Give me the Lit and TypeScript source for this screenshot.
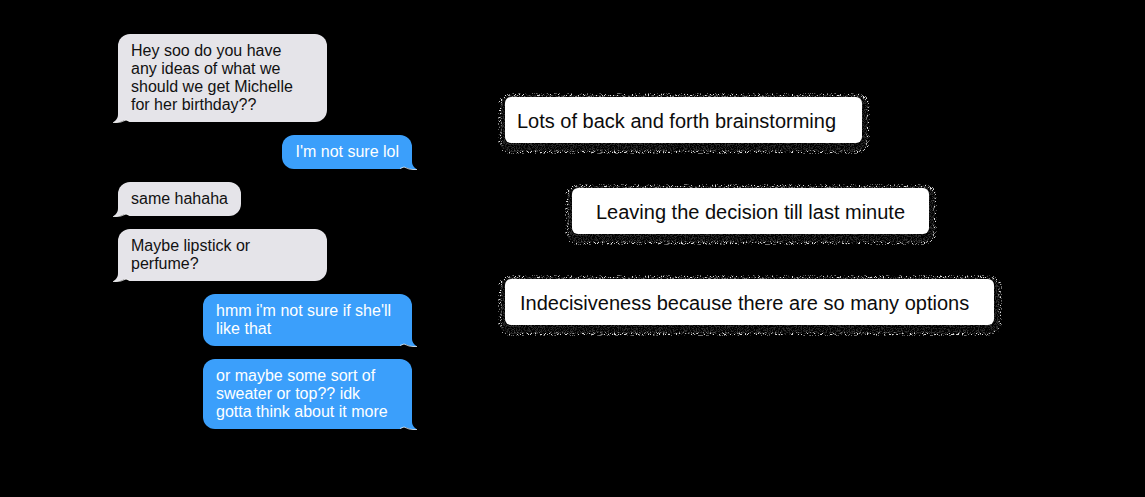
import { LitElement, html, css, svg } from "lit";
import { customElement, property } from "lit/decorators.js";
import { classMap } from "lit/directives/class-map.js";

interface Message {
  text: string;
  sent?: boolean;
}

const MESSAGES: Message[] = [
  { text: "Hey soo do you have\nany ideas of what we\nshould we get Michelle\nfor her birthday??" },
  { text: "I'm not sure lol", sent: true },
  { text: "same hahaha" },
  { text: "Maybe lipstick or\nperfume?" },
  { text: "hmm i'm not sure if she'll\nlike that", sent: true },
  { text: "or maybe some sort of\nsweater or top?? idk\ngotta think about it more", sent: true },
];

@customElement("chat-bubble")
class ChatBubble extends LitElement {
  @property() text = "";
  @property({ type: Boolean, reflect: true }) sent = false;

  static styles = css`
    :host {
      display: flex;
    }
    :host([sent]) {
      justify-content: flex-end;
    }
    .bubble {
      position: relative;
      box-sizing: border-box;
      margin: 0;
      padding: 8px 13px;
      border-radius: 12px;
      background: #e5e4e9;
      color: #111;
      font-size: 16px;
      line-height: 18px;
      white-space: pre;
    }
    .text {
      position: relative;
    }
    .wide {
      width: 209px;
    }
    .sent {
      background: #3b9ffb;
      color: #fff;
    }
    .tail {
      position: absolute;
      left: -6px;
      bottom: -1px;
      width: 22px;
      height: 15px;
      fill: #e5e4e9;
    }
    .notch {
      fill: #000;
    }
    .edge {
      fill: none;
      stroke: #fff;
      stroke-opacity: 0.7;
    }
    .sent .tail {
      left: auto;
      right: -6px;
      transform: scaleX(-1);
      fill: #3b9ffb;
    }
  `;

  render() {
    const classes = { bubble: true, wide: this.text.includes("\n"), sent: this.sent };
    return html`<p class=${classMap(classes)}><svg class="tail" viewBox="0 0 22 15" aria-hidden="true">
        <path d="M6 0V6C6 10 4.500 12 1 14.500C5 15 9 14 13 12C15 13.500 18 14 22 14V0Z" />
        <path class="notch" d="M5 15L9 14.500L14 12L18 14H22V15Z" />
        <path class="edge" d="M1 14.500H5L9 14L14 12L18 13.500" />
      </svg><span class="text">${this.text}</span></p>`;
  }
}

@customElement("note-card")
class NoteCard extends LitElement {
  static styles = css`
    :host {
      display: block;
      position: relative;
    }
    .label {
      position: relative;
      box-sizing: border-box;
      margin: 0;
      padding: 12px 12px 10px;
      border-radius: 6px;
      background: #fff;
      color: #0c0c0c;
      font-size: 20px;
      line-height: 24px;
      white-space: nowrap;
    }
    .halo {
      position: absolute;
      top: -2px;
      left: -5px;
      width: calc(100% + 11px);
      height: calc(100% + 11px);
      overflow: visible;
    }
    .haze {
      fill: #2c2c2c;
    }
    .sparks {
      fill: none;
      stroke: #ddd;
      stroke-width: 3px;
    }
  `;

  render() {
    return html`
      <svg class="halo" aria-hidden="true">
        ${svg`
          <defs>
            <filter id="haze" x="-5%" y="-20%" width="110%" height="140%" color-interpolation-filters="sRGB">
              <feTurbulence type="fractalNoise" baseFrequency="0.83" numOctaves="3" seed="4" />
              <feColorMatrix values="0 0 0 0 1  0 0 0 0 1  0 0 0 0 1  6 0 0 0 -2.7" result="grain" />
              <feComposite in="SourceGraphic" in2="grain" operator="in" />
            </filter>
            <filter id="sparks" x="-5%" y="-20%" width="110%" height="140%" color-interpolation-filters="sRGB">
              <feTurbulence type="fractalNoise" baseFrequency="0.77" numOctaves="3" seed="11" />
              <feColorMatrix values="0 0 0 0 1  0 0 0 0 1  0 0 0 0 1  0 12 0 0 -6.9" result="grain" />
              <feComposite in="SourceGraphic" in2="grain" operator="in" />
            </filter>
          </defs>
          <rect class="haze" width="100%" height="100%" rx="10" filter="url(#haze)" />
          <rect class="sparks" width="100%" height="100%" rx="10" filter="url(#sparks)" />
        `}
      </svg>
      <p class="label"><slot></slot></p>
    `;
  }
}

@customElement("app-root")
class AppRoot extends LitElement {
  static styles = css`
    :host {
      display: block;
      box-sizing: border-box;
      min-height: 100vh;
      padding: 34px 118px;
      background: #000;
      font-family: "Liberation Sans", Arial, sans-serif;
    }
    .board {
      display: flex;
      align-items: flex-start;
      gap: 93px;
    }
    .chat {
      flex: 0 0 294px;
      display: flex;
      flex-direction: column;
      gap: 13px;
    }
    .notes {
      flex: 1;
      display: grid;
      justify-items: start;
      gap: 45px;
      padding-top: 63px;
    }
    .short {
      width: 357px;
    }
    .indented {
      margin-left: 67px;
      text-align: center;
    }
    .long {
      width: 489px;
      text-indent: 3px;
    }
  `;

  render() {
    return html`
      <main class="board">
        <section class="chat" aria-label="Conversation">
          ${MESSAGES.map((m) => html`<chat-bubble .text=${m.text} ?sent=${m.sent}></chat-bubble>`)}
        </section>
        <section class="notes" aria-label="Observations">
          <note-card class="short">Lots of back and forth brainstorming</note-card>
          <note-card class="short indented">Leaving the decision till last minute</note-card>
          <note-card class="long">Indecisiveness because there are so many options</note-card>
        </section>
      </main>
    `;
  }
}
